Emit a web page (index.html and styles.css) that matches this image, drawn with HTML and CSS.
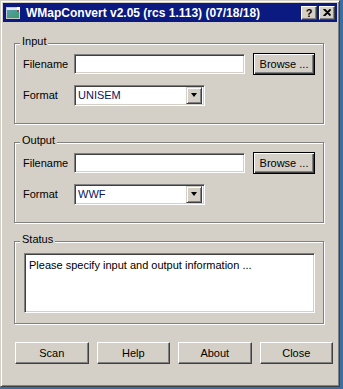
FILE: index.html
```html
<!DOCTYPE html>
<html lang="en">
<head>
<meta charset="UTF-8" />
<title>WMapConvert</title>
<link rel="stylesheet" href="styles.css">
</head>
<body>
<div class="window">
<div class="titlebar">
<svg class="app-icon" width="16" height="16" viewBox="0 0 16 16">
<defs><linearGradient id="g" x1="0" y1="0" x2="1" y2="1">
<stop offset="0" stop-color="#5aa0c8"/><stop offset="1" stop-color="#3c9a5a"/></linearGradient></defs>
<rect x="1.5" y="2.5" width="13" height="11" fill="url(#g)" stroke="#c8c8c8"/>
<rect x="2" y="3" width="12" height="2" fill="#e8e8e8"/>
<rect x="12" y="2" width="3" height="5" fill="#fff"/>
<rect x="12" y="5" width="2" height="2" fill="#d03030"/>
</svg>
<span class="title">WMapConvert v2.05 (rcs 1.113) (07/18/18)</span>
<div class="caption-btns">
<span class="cap-btn">?</span>
<span class="cap-btn"><svg width="8" height="7" viewBox="0 0 8 7"><path d="M0.5 0 L7.5 7 M1.5 0 L7.5 6 M0.5 7 L7.5 0 M1.5 7 L7.5 1" stroke="#000" stroke-width="1.2"/></svg></span>
</div>
</div>
<div class="client">
<div class="group">
<span class="legend">Input</span>
<div class="row"><label>Filename</label><div class="field"></div><button class="btn default">Browse ...</button></div>
<div class="row"><label>Format</label><div class="combo"><span class="val">UNISEM</span><span class="drop"><i></i></span></div></div>
</div>
<div class="group">
<span class="legend">Output</span>
<div class="row"><label>Filename</label><div class="field"></div><button class="btn default">Browse ...</button></div>
<div class="row"><label>Format</label><div class="combo"><span class="val">WWF</span><span class="drop"><i></i></span></div></div>
</div>
<div class="group status">
<span class="legend">Status</span>
<div class="status-box">Please specify input and output information ...</div>
</div>
<div class="actions">
<button class="btn">Scan</button>
<button class="btn">Help</button>
<button class="btn">About</button>
<button class="btn">Close</button>
</div>
</div>
</div>
</body>
</html>
```
FILE: styles.css
```css
body { margin: 0; background: #3a6ea5; font-family: "Liberation Sans", Arial, sans-serif; font-size: 11px; color: #000; }
.window { width: 340px; height: 387px; box-sizing: border-box; padding: 2px; background: #d4d0c8;
  border: 1px solid; border-color: #d4d0c8 #404040 #404040 #d4d0c8;
  box-shadow: inset 1px 1px #fff, inset -1px -1px #808080; }
.titlebar { height: 19px; background: #0a1a80; display: flex; align-items: center; }
.app-icon { margin-left: 2px; display: block; }
.title { color: #fff; font-weight: bold; font-size: 12px; margin-left: 5px; white-space: nowrap; }
.caption-btns { margin-left: auto; margin-right: 2px; display: flex; gap: 2px; }
.cap-btn { width: 16px; height: 14px; box-sizing: border-box; background: #d4d0c8; display: flex; align-items: center; justify-content: center;
  font-weight: bold; font-size: 11px; border: 1px solid; border-color: #fff #404040 #404040 #fff; box-shadow: inset -1px -1px #808080; }
.client { padding: 21px 0 0 11px; }
.group { position: relative; width: 310px; height: 81px; box-sizing: border-box; margin-bottom: 18px; padding: 9px 8px 0 8px;
  border: 1px solid #808080; box-shadow: inset 1px 1px #fff, 1px 1px #fff; }
.legend { position: absolute; top: -10px; left: 5px; padding: 0 2px; line-height: 14px; background: #d4d0c8; }
.row { display: flex; align-items: center; height: 22px; }
.row + .row { margin-top: 9px; }
label { width: 51px; }
.field, .combo, .status-box { box-sizing: border-box; background: #fff; border: 1px solid; border-color: #808080 #fff #fff #808080;
  box-shadow: inset 1px 1px #404040, inset -1px -1px #d4d0c8; }
.field { width: 171px; height: 20px; }
.combo { width: 131px; height: 21px; display: flex; align-items: center; padding: 2px; }
.val { flex: 1; color: #0a1460; padding-left: 1px; }
.drop { width: 16px; height: 17px; box-sizing: border-box; background: #d4d0c8; display: flex; align-items: center; justify-content: center;
  border: 1px solid; border-color: #d4d0c8 #404040 #404040 #d4d0c8; box-shadow: inset 1px 1px #fff, inset -1px -1px #808080; }
.drop i { width: 0; height: 0; border-left: 3.5px solid transparent; border-right: 3.5px solid transparent; border-top: 4px solid #000; }
.btn { font: inherit; color: #000; background: #d4d0c8; height: 22px; padding: 0; box-sizing: border-box;
  border: 1px solid; border-color: #fff #404040 #404040 #fff; box-shadow: inset -1px -1px #808080; }
.btn.default { width: 62px; margin-left: 8px; border-color: #000; box-shadow: inset 1px 1px #fff, inset -1px -1px #404040, inset -2px -2px #808080; }
.group.status { height: 83px; padding: 11px 8px 0 9px; }
.status-box { width: 291px; height: 60px; padding: 5px 4px; }
.actions { margin-left: 1px; width: 318px; display: grid; grid-template-columns: repeat(4, 1fr); gap: 8px; }
```
